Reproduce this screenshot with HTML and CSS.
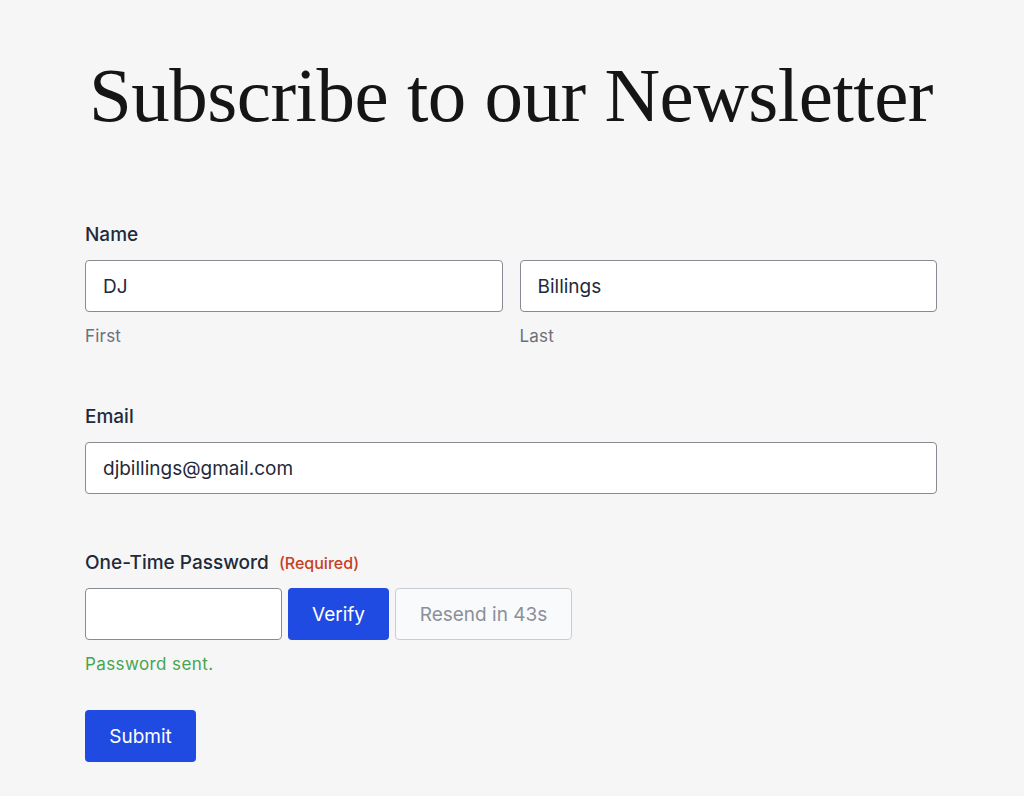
FILE: index.html
```html
<!DOCTYPE html>
<html lang="en">
<head>
    <meta charset="UTF-8">
    <title>Subscribe to our Newsletter</title>
    <link rel="stylesheet" href="styles.css">
</head>
<body>
<div class="page">
    <h1 class="title">Subscribe to our Newsletter</h1>

    <form class="signup" action="#" method="post">
        <fieldset class="field">
            <legend class="field-label">Name</legend>
            <div class="name-row">
                <div class="name-part">
                    <input class="text-input" id="first-name" name="first-name" type="text" value="DJ">
                    <label class="sub-label" for="first-name">First</label>
                </div>
                <div class="name-part">
                    <input class="text-input" id="last-name" name="last-name" type="text" value="Billings">
                    <label class="sub-label" for="last-name">Last</label>
                </div>
            </div>
        </fieldset>

        <div class="field field-email">
            <label class="field-label" for="email">Email</label>
            <input class="text-input" id="email" name="email" type="email" value="djbillings@gmail.com">
        </div>

        <div class="field field-otp">
            <label class="field-label" for="otp">One-Time Password <span class="required">(Required)</span></label>
            <div class="otp-row">
                <input class="text-input otp-input" id="otp" name="otp" type="text">
                <button class="btn btn-primary btn-verify" type="button">Verify</button>
                <button class="btn btn-resend" type="button" disabled>Resend in 43s</button>
            </div>
            <p class="otp-status">Password sent.</p>
        </div>

        <button class="btn btn-primary btn-submit" type="submit">Submit</button>
    </form>
</div>
</body>
</html>
```

FILE: styles.css
```css
body {
    margin: 0;
    background: #f6f6f6;
    color: #1f2a3a;
    font-family: Inter, "Noto Sans", sans-serif;
}

.page {
    width: 852px;
    margin: 0 0 0 85px;
}

.title {
    margin: 0;
    padding-top: 52px;
    font-family: "Liberation Serif", "DejaVu Serif", serif;
    font-weight: 400;
    font-size: 77px;
    line-height: 86px;
    text-align: center;
    color: #151515;
    letter-spacing: -0.5px;
}

.signup {
    margin-top: 85px;
}

.field {
    margin: 0;
    padding: 0;
    border: 0;
    min-width: 0;
}

.field-label {
    display: block;
    padding: 0;
    margin-bottom: 13px;
    font-size: 19px;
    line-height: 24px;
    font-weight: 500;
    color: #1f2a3a;
}

.required {
    margin-left: 5px;
    font-size: 16px;
    line-height: 1;
    font-weight: 500;
    color: #c8401f;
}

.name-row {
    display: grid;
    grid-template-columns: 1fr 1fr;
    gap: 17px;
}

.text-input {
    display: block;
    width: 100%;
    height: 52px;
    box-sizing: border-box;
    padding: 0 17px;
    border: 1px solid #878b92;
    border-radius: 4px;
    background: #fff;
    font-family: inherit;
    font-size: 19px;
    color: #1f2a3a;
}

.sub-label {
    display: block;
    margin-top: 14px;
    font-size: 17px;
    line-height: 20px;
    letter-spacing: 0.2px;
    color: #6b7079;
}

.field-email {
    margin-top: 59px;
}

.field-otp {
    margin-top: 57px;
}

.otp-row {
    display: flex;
    gap: 6px;
}

.otp-input {
    width: 197px;
}

.btn {
    height: 52px;
    box-sizing: border-box;
    border-radius: 4px;
    font-family: inherit;
    font-size: 19px;
    cursor: pointer;
}

.btn-primary {
    border: 0;
    background: #1f4be3;
    color: #fff;
}

.btn-verify {
    width: 101px;
}

.btn-resend {
    width: 177px;
    border: 1px solid #c9ccd1;
    background: #f9fafb;
    color: #8a909a;
}

.otp-status {
    margin: 14px 0 0;
    font-size: 17px;
    line-height: 20px;
    letter-spacing: 0.4px;
    color: #47a551;
}

.btn-submit {
    display: block;
    width: 111px;
    margin-top: 36px;
}
```
